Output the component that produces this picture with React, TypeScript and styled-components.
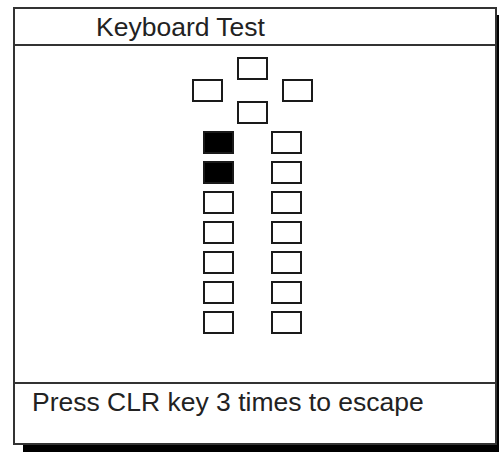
import React from "react"
import styled, { createGlobalStyle } from "styled-components"

const GlobalStyle = createGlobalStyle`
  html, body {
    margin: 0;
    padding: 0;
    background: #ffffff;
  }

  body {
    font-family: "Liberation Sans", Arial, sans-serif;
    overflow: hidden;
  }
`

const Screen = styled.div`
  width: 499px;
  height: 452px;
  padding: 7px 0 0 13px;
  box-sizing: border-box;
`

const Frame = styled.div`
  display: flex;
  flex-direction: column;

  width: 484px;
  height: 438px;
  box-sizing: border-box;

  border: 2px solid #333;
  background: #fff;
  box-shadow: 10px 8px 0 #000;
`

const Header = styled.div`
  display: flex;
  align-items: center;

  height: 37px;
  padding-left: 81px;
  box-sizing: border-box;

  border-bottom: 2px solid #333;

  font-size: 26.5px;
  line-height: 30px;
  color: #222;
`

const Body = styled.div`
  flex: 1;
  display: flex;
  flex-direction: column;
  align-items: center;
  gap: 7px;

  padding: 11px 6px 0 0;
`

const Cross = styled.div`
  display: flex;
  align-items: center;
  gap: 14px;
`

const CrossMiddle = styled.div`
  display: flex;
  flex-direction: column;
  gap: 21px;
`

const Columns = styled.div`
  display: flex;
  gap: 37px;
`

const Column = styled.div`
  display: flex;
  flex-direction: column;
  gap: 7px;
`

const Key = styled.div<{ $pressed?: boolean }>`
  width: 31px;
  height: 23px;
  box-sizing: border-box;

  border: 2px solid #1a1a1a;
  background: ${({ $pressed }) => ($pressed ? "#000" : "#fff")};
`

const Footer = styled.div`
  height: 61px;
  padding: 3px 0 0 17px;
  box-sizing: border-box;

  border-top: 2px solid #333;

  font-size: 26.5px;
  line-height: 30px;
  color: #222;
`

const leftKeys = [true, true, false, false, false, false, false]
const rightKeys = [false, false, false, false, false, false, false]

const App = () => {
  return (
    <>
      <GlobalStyle />
      <Screen>
        <Frame>
          <Header>Keyboard Test</Header>
          <Body>
            <Cross>
              <Key />
              <CrossMiddle>
                <Key />
                <Key />
              </CrossMiddle>
              <Key />
            </Cross>
            <Columns>
              <Column>
                {leftKeys.map((pressed, idx) => (
                  <Key key={idx} $pressed={pressed} />
                ))}
              </Column>
              <Column>
                {rightKeys.map((pressed, idx) => (
                  <Key key={idx} $pressed={pressed} />
                ))}
              </Column>
            </Columns>
          </Body>
          <Footer>Press CLR key 3 times to escape</Footer>
        </Frame>
      </Screen>
    </>
  )
}

export default App
